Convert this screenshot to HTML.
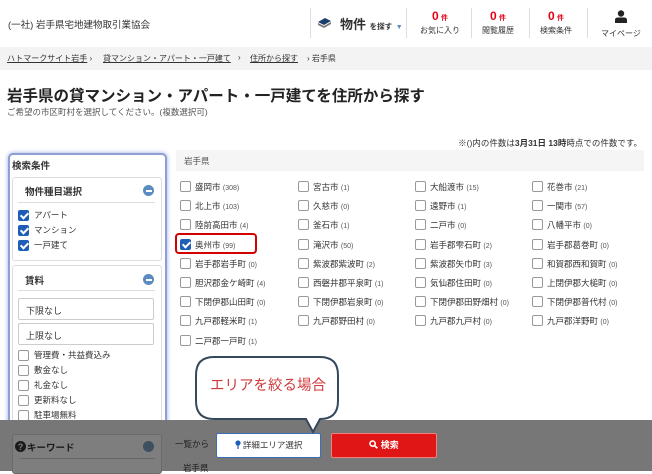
<!DOCTYPE html>
<html><head><meta charset="utf-8">
<style>
*{margin:0;padding:0;box-sizing:border-box}
body{width:652px;height:471px;overflow:hidden;position:relative;background:#fff;font-family:"Liberation Sans","Noto Sans CJK JP",sans-serif;color:#333}
.a{position:absolute;white-space:nowrap}
.hdr{position:absolute;left:0;top:0;width:652px;height:47px;background:#fff;box-shadow:0 1px 2px rgba(0,0,0,.15)}
.vd{position:absolute;top:8px;width:1px;height:30px;background:#ddd}
.cnt{position:absolute;top:9px;width:56px;text-align:center;font-size:8px}
.cnt b{color:#e60012;font-size:12px}
.cnt span{color:#e60012;font-size:7px;font-weight:bold}
.cnt div{margin-top:2px;font-size:8px;color:#333}
.bc{position:absolute;left:0;top:47px;width:652px;height:23px;background:#f3f3f3;font-size:8px;color:#333}
.bc u{text-decoration:underline}
.cb{position:absolute;width:11px;height:11px;border:1px solid #999;border-radius:2px;background:#fff}
.ck{background:#1e5eb8;border-color:#1e5eb8}
.ck:after{content:"";position:absolute;left:3px;top:0px;width:3px;height:6px;border:solid #fff;border-width:0 2px 2px 0;transform:rotate(45deg)}
.it{position:absolute;font-size:8.5px;color:#333;white-space:nowrap}
.it small{font-size:7px;color:#555}
.box{position:absolute;background:#fff;border:1px solid #ddd;border-radius:3px}
.minus{position:absolute;width:11px;height:11px;border-radius:50%;background:#5b8bc0}
.minus:after{content:"";position:absolute;left:2.5px;top:4.5px;width:6px;height:2px;background:#fff}
.inp{position:absolute;left:18px;width:136px;height:22px;border:1px solid #ccc;border-radius:2px;font-size:9px;padding:5px 7px;background:#fff}
</style></head><body>
<div class="hdr">
 <div class="a" style="left:8px;top:17px;font-size:9.5px">(一社) 岩手県宅地建物取引業協会</div>
 <div class="vd" style="left:310px"></div>
 <svg class="a" style="left:317px;top:16px" width="15" height="12" viewBox="0 0 15 12"><path d="M1 6 L8 2 L14 5 L7 9 Z" fill="#1c3f6e"/><path d="M1 7 L7 10 L14 6 L14 8 L7 12 L1 9Z" fill="#777"/></svg>
 <div class="a" style="left:340px;top:14px;font-size:13px;font-weight:bold">物件 <span style="font-size:7.5px">を探す</span> <span style="font-size:7px;color:#5b8bc0">▼</span></div>
 <div class="vd" style="left:406px"></div>
 <div class="cnt" style="left:412px"><b>0</b> <span>件</span><div>お気に入り</div></div>
 <div class="vd" style="left:471px"></div>
 <div class="cnt" style="left:470px"><b>0</b> <span>件</span><div>閲覧履歴</div></div>
 <div class="vd" style="left:529px"></div>
 <div class="cnt" style="left:528px"><b>0</b> <span>件</span><div>検索条件</div></div>
 <div class="vd" style="left:587px"></div>
 <svg class="a" style="left:615px;top:10px" width="12" height="13" viewBox="0 0 12 13"><circle cx="6" cy="3.5" r="3.2" fill="#222"/><path d="M0 13 V10 Q0 7.5 3 7.5 H9 Q12 7.5 12 10 V13Z" fill="#222"/></svg>
 <div class="a" style="left:601px;top:28px;font-size:8px">マイページ</div>
</div>
<div class="bc">
 <div class="a" style="left:7px;top:6px"><u>ハトマークサイト岩手</u> ›</div>
 <div class="a" style="left:103px;top:6px"><u>貸マンション・アパート・一戸建て</u></div>
 <div class="a" style="left:238px;top:6px">›</div>
 <div class="a" style="left:250px;top:6px"><u>住所から探す</u></div>
 <div class="a" style="left:307px;top:6px">› 岩手県</div>
</div>
<div class="a" style="left:7px;top:84px;font-size:15.5px;font-weight:bold;color:#222">岩手県の貸マンション・アパート・一戸建てを住所から探す</div>
<div class="a" style="left:7px;top:106px;font-size:8.5px;color:#555">ご希望の市区町村を選択してください。(複数選択可)</div>
<div class="a" style="right:10px;top:137px;font-size:8.5px">※()内の件数は<b>3月31日 13時</b>時点での件数です。</div>

<div class="a" style="left:176px;top:150px;width:468px;height:21px;background:#f5f5f5"></div>
<div class="a" style="left:184px;top:155px;font-size:8.5px;color:#555">岩手県</div>
<div id="grid"></div>

<div class="a" style="left:8px;top:153px;width:159px;height:275px;border:2px solid #8f9fd6;border-radius:5px;box-shadow:0 0 5px #9aa8e0;background:#fff"></div>
<div class="a" style="left:12px;top:158px;font-size:9.5px;font-weight:bold">検索条件</div>
<div class="box" style="left:12px;top:177px;width:150px;height:84px"></div>
<div class="a" style="left:25px;top:184px;font-size:9.5px;font-weight:bold">物件種目選択</div>
<div class="minus" style="left:143px;top:185px"></div>
<div class="a" style="left:18px;top:202px;width:137px;height:1px;background:#ddd"></div>
<div class="cb ck" style="left:18px;top:210px"></div><div class="it" style="left:34px;top:209px">アパート</div>
<div class="cb ck" style="left:18px;top:225px"></div><div class="it" style="left:34px;top:224px">マンション</div>
<div class="cb ck" style="left:18px;top:240px"></div><div class="it" style="left:34px;top:239px">一戸建て</div>
<div class="box" style="left:12px;top:265px;width:150px;height:160px;border-bottom:none"></div>
<div class="a" style="left:25px;top:273px;font-size:9.5px;font-weight:bold">賃料</div>
<div class="minus" style="left:143px;top:274px"></div>
<div class="a" style="left:18px;top:290px;width:137px;height:1px;background:#ddd"></div>
<div class="inp" style="top:298px">下限なし</div>
<div class="inp" style="top:323px">上限なし</div>
<div class="cb" style="left:18px;top:350px"></div><div class="it" style="left:34px;top:349px">管理費・共益費込み</div>
<div class="cb" style="left:18px;top:365px"></div><div class="it" style="left:34px;top:364px">敷金なし</div>
<div class="cb" style="left:18px;top:380px"></div><div class="it" style="left:34px;top:379px">礼金なし</div>
<div class="cb" style="left:18px;top:395px"></div><div class="it" style="left:34px;top:394px">更新料なし</div>
<div class="cb" style="left:18px;top:410px"></div><div class="it" style="left:34px;top:409px">駐車場無料</div>

<div class="a" style="left:0;top:420px;width:652px;height:51px;background:#777"></div>
<div class="a" style="left:12px;top:434px;width:150px;height:40px;background:#7e7e7e;border:1px solid #6a6a6a;border-radius:3px"></div>
<svg class="a" style="left:15px;top:441px" width="11" height="11" viewBox="0 0 11 11"><circle cx="5.5" cy="5.5" r="5.5" fill="#1a1a1a"/><text x="5.5" y="9" font-size="9" font-weight="bold" fill="#7e7e7e" text-anchor="middle" font-family="Liberation Sans">?</text></svg>
<div class="a" style="left:27px;top:440px;font-size:9.5px;font-weight:bold;color:#1a1a1a">キーワード</div>
<div class="a" style="left:143px;top:441px;width:11px;height:11px;border-radius:50%;background:#3e4f60"></div>
<div class="a" style="left:20px;top:458px;width:135px;height:1px;background:#666"></div>
<div class="a" style="left:175px;top:438px;font-size:8.5px;color:#222">一覧から</div>
<div class="a" style="left:183px;top:462px;font-size:8.5px;color:#222">岩手県</div>
<div class="a" style="left:216px;top:433px;width:105px;height:25px;background:#fff;border:1px solid #3b6fb5;border-radius:2px;font-size:8.5px;text-align:center;line-height:23px;color:#333"><svg width="6" height="9" viewBox="0 0 6 9" style="vertical-align:-1px"><circle cx="3" cy="3" r="2.6" fill="#1e5eb8"/><rect x="2.4" y="4" width="1.2" height="5" fill="#1e5eb8"/></svg> 詳細エリア選択</div>
<div class="a" style="left:331px;top:433px;width:106px;height:25px;background:#e01515;border:1px solid #f08080;border-radius:2px;font-size:9px;font-weight:bold;text-align:center;line-height:23px;color:#fff"><svg width="9" height="9" viewBox="0 0 9 9" style="vertical-align:-1px"><circle cx="3.6" cy="3.6" r="2.6" fill="none" stroke="#fff" stroke-width="1.6"/><path d="M5.5 5.5 L8.3 8.3" stroke="#fff" stroke-width="1.8"/></svg> 検索</div>

<svg class="a" style="left:194px;top:355px" width="148" height="82" viewBox="0 0 148 82">
<path d="M20 2 H126 Q144 2 144 20 V46 Q144 64 126 64 H126 L119 77 L112 64 H20 Q2 64 2 46 V20 Q2 2 20 2Z" fill="#fff" stroke="#35495c" stroke-width="2"/>
</svg>
<div class="a" style="left:210px;top:374px;font-size:14.5px;color:#d13a3a">エリアを絞る場合</div>

<script>
var d=[["盛岡市","308"],["宮古市","1"],["大船渡市","15"],["花巻市","21"],
["北上市","103"],["久慈市","0"],["遠野市","1"],["一関市","57"],
["陸前高田市","4"],["釜石市","1"],["二戸市","0"],["八幡平市","0"],
["奥州市","99"],["滝沢市","50"],["岩手郡雫石町","2"],["岩手郡葛巻町","0"],
["岩手郡岩手町","0"],["紫波郡紫波町","2"],["紫波郡矢巾町","3"],["和賀郡西和賀町","0"],
["胆沢郡金ケ崎町","4"],["西磐井郡平泉町","1"],["気仙郡住田町","0"],["上閉伊郡大槌町","0"],
["下閉伊郡山田町","0"],["下閉伊郡岩泉町","0"],["下閉伊郡田野畑村","0"],["下閉伊郡普代村","0"],
["九戸郡軽米町","1"],["九戸郡野田村","0"],["九戸郡九戸村","0"],["九戸郡洋野町","0"],
["二戸郡一戸町","1"]];
var xs=[180,298,415,532],h="";
d.forEach(function(e,i){var c=i%4,r=Math.floor(i/4),y=181+r*19.2;
h+='<div class="cb'+(i==12?' ck':'')+'" style="left:'+xs[c]+'px;top:'+y+'px"></div><div class="it" style="left:'+(xs[c]+15)+'px;top:'+(y)+'px">'+e[0]+' <small>('+e[1]+')</small></div>';});
h+='<div class="a" style="left:175px;top:233px;width:82px;height:21px;border:2px solid #d40000;border-radius:4px"></div>';
document.getElementById("grid").innerHTML=h;
</script>
</body></html>
